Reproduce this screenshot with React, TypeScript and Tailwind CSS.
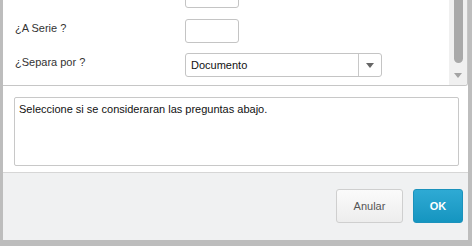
export default function App() {
  return (
    <div className="w-[472px] h-[246px] bg-[#bdbdbd] pl-[3px] pr-[4px] pb-[6px] font-['Liberation_Sans',Arial,sans-serif] text-[11px]">
      <div className="h-full bg-white flex flex-col">
        <QuestionPanel />
        <div className="h-[86px] shrink-0 pt-[11px] pb-[6px] pl-[11px] pr-[9px]">
          <div className="h-full border border-[#c8c8c8] rounded-[2px] px-[4px] pt-[4px] text-[#111] leading-[14px]">
            Seleccione si se consideraran las preguntas abajo.
          </div>
        </div>
        <div className="flex-1 border-t border-[#d6d6d6] bg-[#f0f1f2] flex justify-end items-start pt-[16px] pr-[5px] gap-[10px]">
          <button className="w-[67px] h-[34px] rounded-[3px] border border-[#cfcfcf] bg-gradient-to-b from-[#fbfbfb] to-[#ededed] text-[#555] text-[11px]">
            Anular
          </button>
          <button className="w-[50px] h-[34px] rounded-[3px] border border-[#1b92bc] bg-gradient-to-b from-[#2eaad4] to-[#1495c0] text-white font-bold text-[11px]">
            OK
          </button>
        </div>
      </div>
    </div>
  )
}

function QuestionPanel() {
  return (
    <div className="h-[86px] shrink-0 flex border-b border-r border-[#c6c6c6] rounded-br-[3px] overflow-hidden">
      <div className="flex-1 flex flex-col justify-end pb-[8px] text-[#333]">
        <Row label="">
          <div className="w-[54px] h-[24px] border border-[#c4c4c4] rounded-[3px]" />
        </Row>
        <div className="h-[11px] shrink-0" />
        <Row label="¿A Serie ?">
          <div className="w-[54px] h-[24px] border border-[#c4c4c4] rounded-[3px]" />
        </Row>
        <div className="h-[10px] shrink-0" />
        <Row label="¿Separa por ?">
          <div className="w-[197px] h-[24px] border border-[#c4c4c4] rounded-[3px] flex">
            <div className="flex-1 pl-[5px] flex items-center text-[#111]">Documento</div>
            <div className="w-[23px] border-l border-[#c8c8c8] flex items-center justify-center">
              <svg width="8" height="5" viewBox="0 0 8 5">
                <path d="M0 0 H8 L4 5 Z" fill="#666" />
              </svg>
            </div>
          </div>
        </Row>
      </div>
      <div className="w-[18px] bg-[#f0f0f0] flex flex-col items-center">
        <div className="w-[9px] h-[63px] shrink-0 bg-[#a9a9a9] rounded-b-full" />
        <div className="mt-[10px]">
          <svg width="8" height="5" viewBox="0 0 8 5">
            <path d="M0 0 H8 L4 5 Z" fill="#a3a3a3" />
          </svg>
        </div>
      </div>
    </div>
  )
}

function Row({ label, children }: { label: string; children: React.ReactNode }) {
  return (
    <div className="flex items-start shrink-0">
      <div className="w-[182px] shrink-0 pl-[12px] pt-[2px] leading-[14px]">{label}</div>
      {children}
    </div>
  )
}
